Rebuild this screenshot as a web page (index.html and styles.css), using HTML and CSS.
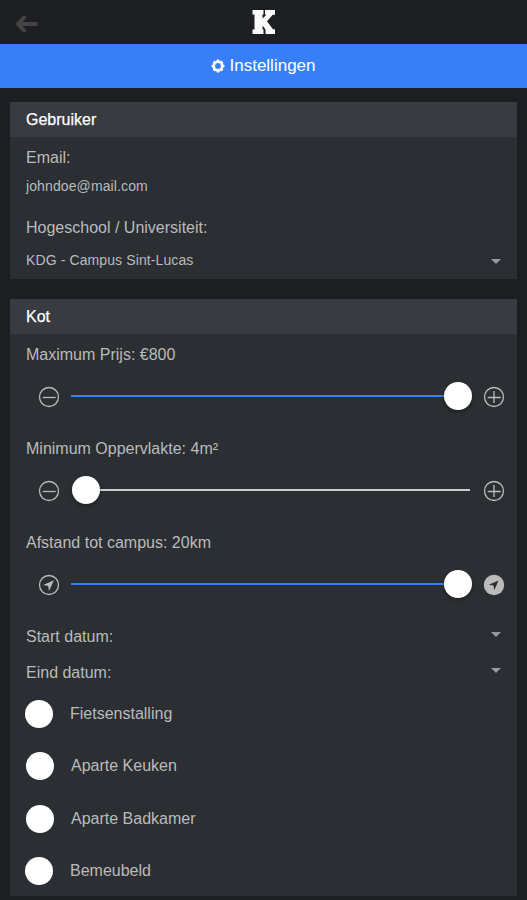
FILE: index.html
```html
<!DOCTYPE html>
<html lang="nl">
<head>
<meta charset="utf-8">
<title>Instellingen</title>
<link rel="stylesheet" href="styles.css">
</head>
<body>
<svg class="defs" width="0" height="0">
  <symbol id="minus" viewBox="0 0 22 22"><circle cx="11" cy="11" r="9.5"/><path d="M4.700 11.500h13"/></symbol>
  <symbol id="plus" viewBox="0 0 22 22"><circle cx="11" cy="11" r="9.5"/><path d="M4.700 11.500h13M11 5v12"/></symbol>
  <symbol id="nav" viewBox="0 0 22 22"><circle cx="11" cy="11" r="9.500"/><path class="solid" d="M16 6.200 5.200 11l5 .9.700 5.200z"/></symbol>
  <symbol id="nav-full" viewBox="0 0 22 22"><circle class="solid" cx="11" cy="11" r="10.200"/><path class="hole" d="M15.600 6.500 5.800 10.700l4.700.9.700 4.600z"/></symbol>
</svg>
<header class="topbar">
  <svg class="back" width="24" height="20" viewBox="0 0 24 20"><path d="M9 3.500 3 10l6 6.500M4 10h17"/></svg>
  <svg class="logo" width="24" height="24" viewBox="0 0 24 24"><path d="M.5 0H11.500v4.500H10.500V8.500L14.500 4.800H13V0h10v4.800h-2.300L15 11.300l6 8h2V24h-9.500v-4.500L10.900 16l-.4.400v3.100h1V24H.5v-4.500h2v-15h-2z"/></svg>
</header>
<div class="titlebar">
  <svg width="14" height="14" viewBox="0 0 14 14"><circle cx="7" cy="7" r="4.200"/><path d="M7 .6v2M7 11.400v2M.6 7h2M11.400 7h2M2.500 2.500l1.300 1.300M10.200 10.200l1.300 1.300M11.500 2.500l-1.300 1.300M3.800 10.200l-1.300 1.300"/></svg>
  <h1>Instellingen</h1>
</div>
<main>
  <section class="card">
    <h2>Gebruiker</h2>
    <div class="user">
      <div class="label">Email:</div>
      <div class="value email">johndoe@mail.com</div>
      <div class="label">Hogeschool / Universiteit:</div>
      <div class="value select"><span>KDG - Campus Sint-Lucas</span><i class="caret"></i></div>
    </div>
  </section>
  <section class="card">
    <h2>Kot</h2>
    <div class="setting">
      <div class="label">Maximum Prijs: €800</div>
      <div class="range"><svg class="icon"><use href="#minus"/></svg><div class="track full"><i class="thumb"></i></div><svg class="icon"><use href="#plus"/></svg></div>
    </div>
    <div class="setting">
      <div class="label">Minimum Oppervlakte: 4m²</div>
      <div class="range"><svg class="icon"><use href="#minus"/></svg><div class="track empty"><i class="thumb"></i></div><svg class="icon"><use href="#plus"/></svg></div>
    </div>
    <div class="setting">
      <div class="label">Afstand tot campus: 20km</div>
      <div class="range"><svg class="icon"><use href="#nav"/></svg><div class="track full"><i class="thumb"></i></div><svg class="icon"><use href="#nav-full"/></svg></div>
    </div>
    <div class="dates">
      <div class="date"><span>Start datum:</span><i class="caret"></i></div>
      <div class="date"><span>Eind datum:</span><i class="caret"></i></div>
    </div>
    <ul class="options">
      <li><i class="dot"></i>Fietsenstalling</li>
      <li class="inset"><i class="dot"></i>Aparte Keuken</li>
      <li class="inset"><i class="dot"></i>Aparte Badkamer</li>
      <li><i class="dot"></i>Bemeubeld</li>
    </ul>
  </section>
</main>
</body>
</html>
```
FILE: styles.css
```css
* { box-sizing: border-box; }
html { overflow: hidden; background: #1d1e22; }
body { margin: 0; height: 900px; overflow: hidden; font: 16px/20px "Liberation Sans", Arial, sans-serif; color: #bbb; }
h1, h2 { margin: 0; font-weight: 400; color: #fff; }
h2 { -webkit-text-stroke: .25px #fff; }
.defs { position: absolute; }
.topbar { height: 44px; display: grid; grid-template-columns: 1fr 24px 1fr; padding: 0 15px; }
.back { margin-top: 14px; fill: none; stroke: #444; stroke-width: 4; stroke-linecap: round; stroke-linejoin: round; }
.logo { margin-top: 10px; fill: #fafafa; }
.titlebar { height: 44px; display: flex; align-items: center; justify-content: center; gap: 4px; background: #387ff7; }
.titlebar svg { margin-top: -1px; fill: none; stroke: #fff; stroke-width: 2.600; }
.titlebar h1 { font-size: 17px; line-height: 44px; }
main { padding: 14px 10px 0; }
.card { background: #2b2e32; margin-bottom: 20px; }
.card h2 { height: 35px; padding-left: 16px; font-size: 16px; line-height: 35px; background: #383b41; }
.user { height: 142px; padding: 11px 16px 0; }
.value { font-size: 14px; letter-spacing: .11px; }
.email { margin: 8px 0 22px; }
.select, .date { display: flex; justify-content: space-between; align-items: center; }
.select { margin-top: 12px; }
.caret { border: 5px solid transparent; border-top-color: #999; border-bottom: 0; }
.select .caret { margin-top: 3px; }
.setting { height: 94px; padding: 11px 0 0 16px; }
.range { height: 28px; margin: 17px 0 0 12px; display: flex; align-items: center; }
.icon { width: 22px; height: 22px; margin-top: 2px; fill: none; stroke: #bbb; stroke-width: 1.300; }
.solid { fill: #bbb; stroke: none; }
.hole { fill: #2b2e32; stroke: none; }
.track { width: 399px; height: 2px; margin: 0 13px 0 11px; display: flex; align-items: center; }
.full { background: #387ff7; justify-content: flex-end; }
.empty { background: linear-gradient(90deg, transparent 14px, #ccc 14px); }
.thumb { width: 28px; height: 28px; border-radius: 50%; background: #fff; box-shadow: 0 2px 4px rgba(0,0,0,.3); }
.full .thumb { margin-right: -2px; }
.empty .thumb { margin-left: 1px; }
.dates { padding: 5px 16px 0; }
.date { height: 36px; padding-bottom: 4px; }
.date .caret { margin-bottom: 5px; }
.options { list-style: none; margin: 0; padding: 7px 0 0 15px; height: 203px; }
.options li { height: 28px; display: flex; align-items: center; gap: 17px; margin-bottom: 24px; }
.options li:nth-child(2) { margin-bottom: 25px; }
.options .inset { padding-left: 1px; }
.dot { width: 28px; height: 28px; border-radius: 50%; background: #fff; }
```
